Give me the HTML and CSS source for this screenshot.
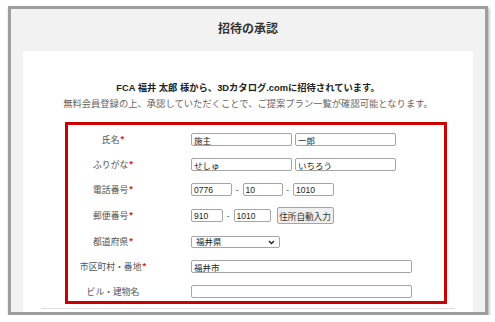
FILE: index.html
```html
<!DOCTYPE html>
<html lang="ja">
<head>
    <meta charset="UTF-8">
    <meta name="viewport" content="width=device-width, initial-scale=1.0">
    <title>招待の承認</title>
    <link rel="stylesheet" href="styles.css">
</head>
<body>
    <div class="window">
        <h1 class="window-title">招待の承認</h1>

        <div class="card">
            <p class="lead">FCA 福井 太郎 様から、3Dカタログ.comに招待されています。</p>
            <p class="sub">無料会員登録の上、承認していただくことで、ご提案プラン一覧が確認可能となります。</p>

            <!-- 入力フォーム -->
            <div class="form-box">
                <div class="row">
                    <label class="label">氏名<span class="req">*</span></label>
                    <div class="field">
                        <input type="text" class="in-name" value="施主">
                        <input type="text" class="in-name" value="一郎">
                    </div>
                </div>
                <div class="row">
                    <label class="label">ふりがな<span class="req">*</span></label>
                    <div class="field">
                        <input type="text" class="in-name" value="せしゅ">
                        <input type="text" class="in-name" value="いちろう">
                    </div>
                </div>
                <div class="row">
                    <label class="label">電話番号<span class="req">*</span></label>
                    <div class="field">
                        <input type="text" class="in-tel" value="0776">
                        <span class="dash">-</span>
                        <input type="text" class="in-tel2" value="10">
                        <span class="dash">-</span>
                        <input type="text" class="in-tel" value="1010">
                    </div>
                </div>
                <div class="row row-zip">
                    <label class="label">郵便番号<span class="req">*</span></label>
                    <div class="field">
                        <input type="text" class="in-zip1" value="910">
                        <span class="dash">-</span>
                        <input type="text" class="in-zip2" value="1010">
                        <button class="btn-addr">住所自動入力</button>
                    </div>
                </div>
                <div class="row">
                    <label class="label">都道府県<span class="req">*</span></label>
                    <div class="field">
                        <div class="select-wrap">
                            <select class="in-pref">
                                <option>福井県</option>
                            </select>
                            <svg class="chevron" width="7" height="5" viewBox="0 0 7 5">
                                <path d="M1 1 L3.5 3.5 L6 1" fill="none" stroke="#222" stroke-width="1.4"/>
                            </svg>
                        </div>
                    </div>
                </div>
                <div class="row">
                    <label class="label">市区町村・番地<span class="req">*</span></label>
                    <div class="field">
                        <input type="text" class="in-long" value="福井市">
                    </div>
                </div>
                <div class="row">
                    <label class="label">ビル・建物名</label>
                    <div class="field">
                        <input type="text" class="in-long" value="">
                    </div>
                </div>
            </div>

            <hr class="rule">
        </div>
    </div>
</body>
</html>
```

FILE: styles.css
```css
body {
    margin: 0;
    background: #ffffff;
    font-family: "Liberation Sans", "Noto Sans CJK JP", sans-serif;
    color: #333;
}

.window {
    width: 480px;
    height: 309px;
    margin: 6px 0 0 8px;
    box-sizing: border-box;
    border: 3px solid #9e9e9e;
    box-shadow: 1px 2px 3px rgba(0, 0, 0, 0.35);
    background: #f2f2f2;
    overflow: hidden;
}

.window-title {
    margin: 0;
    padding: 10px 0 12px;
    font-size: 12px;
    line-height: 20px;
    font-weight: bold;
    text-align: center;
    color: #333;
}

.card {
    margin: 0 12px;
    height: 260px;
    background: #fff;
    border-radius: 3px 3px 0 0;
    padding-top: 29px;
}

.lead,
.sub {
    margin: 0;
    text-align: center;
    font-size: 9.3px;
    line-height: 16px;
}

.lead {
    font-weight: bold;
    color: #222;
}

.sub {
    color: #666;
}

.form-box {
    margin: 10px 0 0 42px;
    width: 382px;
    height: 182px;
    box-sizing: border-box;
    padding-top: 2px;
    border: 3px solid #cc0000;
}

.row {
    display: flex;
    align-items: center;
    height: 25px;
}

.row-zip {
    height: 27px;
}

.label {
    width: 90px;
    margin-right: 33px;
    text-align: center;
    font-size: 8.8px;
    color: #555;
}

.req {
    color: #e02020;
    font-size: 9.5px;
    font-weight: bold;
    vertical-align: 1px;
    margin-left: 1px;
}

.field {
    display: flex;
    align-items: center;
}

input,
select {
    height: 13px;
    box-sizing: border-box;
    border: 1px solid #a5a5a5;
    border-radius: 2px;
    padding: 0 2px;
    font-family: "Liberation Sans", "Noto Sans CJK JP", sans-serif;
    font-size: 8.5px;
    color: #222;
    background: #fff;
    outline: none;
}

.in-name {
    width: 101px;
    margin-right: 3px;
}

.in-tel {
    width: 41px;
}

.in-tel2 {
    width: 40px;
}

.in-zip1 {
    width: 32px;
}

.in-zip2 {
    width: 37px;
}

.in-long {
    width: 221px;
}

.dash {
    width: 10.5px;
    text-align: center;
    font-size: 8.5px;
    color: #555;
}

.btn-addr {
    margin-left: 6px;
    width: 57px;
    height: 17px;
    padding: 0;
    border: 1px solid #a5a5a5;
    border-radius: 2px;
    background: #efefef;
    font-family: "Liberation Sans", "Noto Sans CJK JP", sans-serif;
    font-size: 8.6px;
    color: #333;
}

.select-wrap {
    position: relative;
    display: flex;
}

.in-pref {
    width: 89px;
    height: 12px;
    -webkit-appearance: none;
    appearance: none;
    padding: 0 4px;
}

.chevron {
    position: absolute;
    right: 5px;
    top: 4px;
}

.rule {
    margin: 4px 18px 0;
    border: none;
    border-top: 1px solid #dddddd;
}
```
